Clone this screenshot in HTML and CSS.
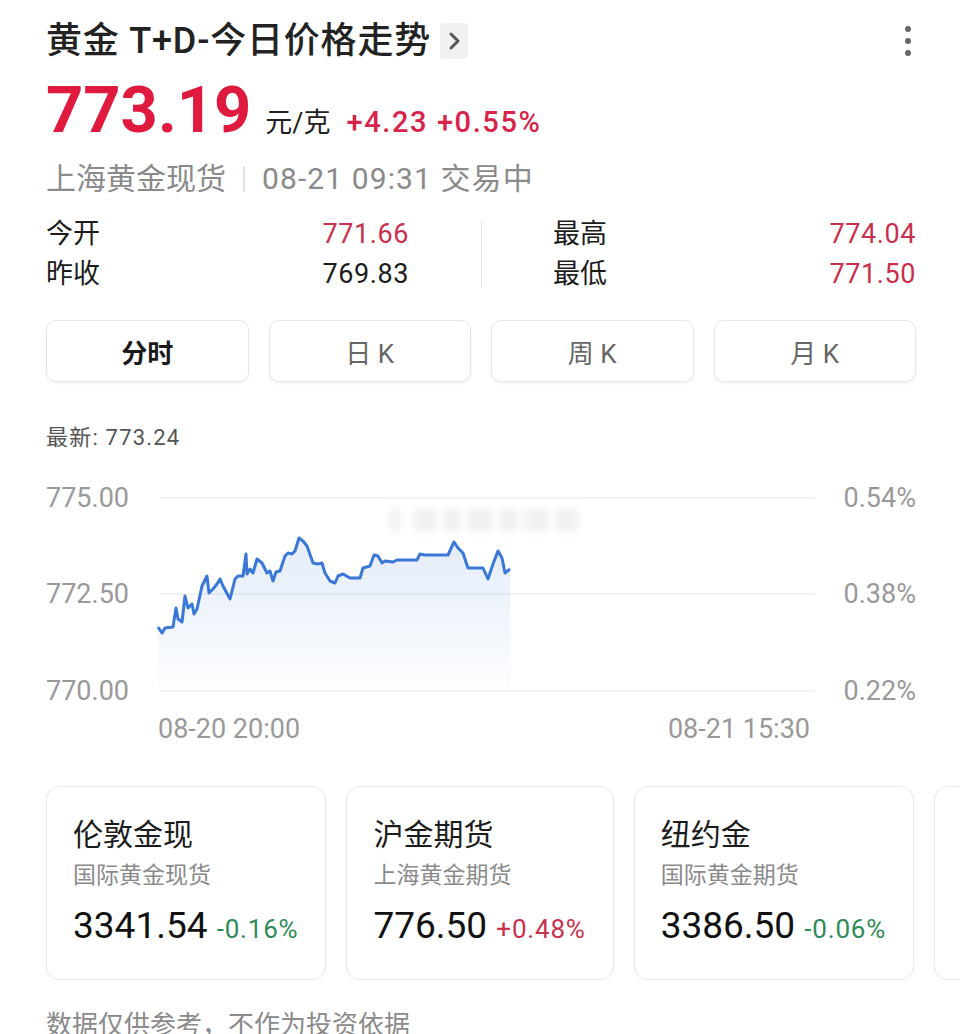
FILE: index.html
```html
<!DOCTYPE html>
<html lang="zh-CN">
<head>
    <meta charset="UTF-8">
    <title>黄金 T+D-今日价格走势</title>
    <link rel="stylesheet" href="styles.css">
</head>
<body>
    <div class="page">
        <header class="head">
            <h1 class="title">黄金 T+D-今日价格走势</h1>
            <span class="more-btn">
                <svg width="28" height="36" viewBox="0 0 28 36"><path d="M11 11 L18 18 L11 25" fill="none" stroke="#555" stroke-width="3" stroke-linecap="round" stroke-linejoin="round"/></svg>
            </span>
            <span class="kebab">
                <svg width="10" height="34" viewBox="0 0 10 34"><circle cx="5" cy="5" r="3" fill="#666"/><circle cx="5" cy="17" r="3" fill="#666"/><circle cx="5" cy="29" r="3" fill="#666"/></svg>
            </span>
        </header>

        <div class="price-row">
            <span class="price">773.19</span>
            <span class="unit">元/克</span>
            <span class="change">+4.23 +0.55%</span>
        </div>

        <div class="meta">
            <span>上海黄金现货</span>
            <span class="sep"></span>
            <span class="meta-time">08-21 09:31 交易中</span>
        </div>

        <div class="stats">
            <div class="stat-col">
                <div class="stat"><span>今开</span><span class="up">771.66</span></div>
                <div class="stat"><span>昨收</span><span>769.83</span></div>
            </div>
            <div class="divider"></div>
            <div class="stat-col">
                <div class="stat"><span>最高</span><span class="up">774.04</span></div>
                <div class="stat"><span>最低</span><span class="up">771.50</span></div>
            </div>
        </div>

        <div class="tabs">
            <div class="tab active">分时</div>
            <div class="tab">日 K</div>
            <div class="tab">周 K</div>
            <div class="tab">月 K</div>
        </div>

        <div class="latest">最新: 773.24</div>

        <svg class="chart" width="870" height="280" viewBox="0 0 870 280">
            <defs>
                <linearGradient id="fill" x1="0" y1="0" x2="0" y2="1">
                    <stop offset="0" stop-color="#3a78d8" stop-opacity="0.14"/>
                    <stop offset="1" stop-color="#3a78d8" stop-opacity="0.01"/>
                </linearGradient>
                <filter id="smudge" x="-20%" y="-50%" width="140%" height="200%"><feGaussianBlur stdDeviation="4"/></filter>
            </defs>
            <g stroke="#ececec" stroke-width="1.5">
                <line x1="114" y1="27" x2="769" y2="27"/>
                <line x1="114" y1="123" x2="769" y2="123"/>
                <line x1="114" y1="220" x2="769" y2="220"/>
            </g>
            <g class="axis">
                <text x="0" y="36">775.00</text>
                <text x="0" y="132">772.50</text>
                <text x="0" y="229">770.00</text>
                <text x="870" y="36" text-anchor="end">0.54%</text>
                <text x="870" y="132" text-anchor="end">0.38%</text>
                <text x="870" y="229" text-anchor="end">0.22%</text>
                <text x="112" y="267">08-20 20:00</text>
                <text x="764" y="267" text-anchor="end">08-21 15:30</text>
            </g>
            <g filter="url(#smudge)" fill="#dcdcdc" opacity="0.45">
                <rect x="344" y="38" width="10" height="22"/>
                <rect x="368" y="38" width="22" height="22"/>
                <rect x="398" y="38" width="16" height="22"/>
                <rect x="422" y="38" width="24" height="22"/>
                <rect x="454" y="38" width="18" height="22"/>
                <rect x="480" y="38" width="22" height="22"/>
                <rect x="510" y="38" width="22" height="22"/>
            </g>
            <path fill="url(#fill)" d="M112 156 L116 162 L119 157 L127 156 L130 137 L132 148 L136 151 L139 125 L142 137 L146 133 L148 143 L151 138 L156 115 L161 105 L163 122 L167 118 L171 113 L174 108 L177 115 L184 128 L189 108 L192 105 L197 105 L200 83 L201 103 L204 98 L207 102 L211 88 L216 92 L221 102 L224 100 L227 110 L230 101 L234 100 L239 85 L242 82 L246 83 L249 80 L253 67 L257 70 L261 75 L267 92 L272 93 L276 92 L279 102 L284 110 L289 112 L292 105 L297 103 L304 107 L314 107 L317 97 L324 95 L328 84 L332 85 L336 92 L339 90 L347 91 L351 89 L371 89 L374 83 L379 84 L402 84 L408 71 L412 77 L417 82 L422 97 L437 97 L442 108 L447 93 L452 80 L456 87 L459 102 L464 98 L465 220 L112 220 Z"/>
            <path fill="none" stroke="#3a78d8" stroke-width="3" stroke-linejoin="round" d="M112 156 L116 162 L119 157 L127 156 L130 137 L132 148 L136 151 L139 125 L142 137 L146 133 L148 143 L151 138 L156 115 L161 105 L163 122 L167 118 L171 113 L174 108 L177 115 L184 128 L189 108 L192 105 L197 105 L200 83 L201 103 L204 98 L207 102 L211 88 L216 92 L221 102 L224 100 L227 110 L230 101 L234 100 L239 85 L242 82 L246 83 L249 80 L253 67 L257 70 L261 75 L267 92 L272 93 L276 92 L279 102 L284 110 L289 112 L292 105 L297 103 L304 107 L314 107 L317 97 L324 95 L328 84 L332 85 L336 92 L339 90 L347 91 L351 89 L371 89 L374 83 L379 84 L402 84 L408 71 L412 77 L417 82 L422 97 L437 97 L442 108 L447 93 L452 80 L456 87 L459 102 L464 98"/>
        </svg>

        <div class="cards">
            <div class="card">
                <div class="card-title">伦敦金现</div>
                <div class="card-sub">国际黄金现货</div>
                <div class="card-value">3341.54 <span class="down">-0.16%</span></div>
            </div>
            <div class="card">
                <div class="card-title">沪金期货</div>
                <div class="card-sub">上海黄金期货</div>
                <div class="card-value">776.50 <span class="up">+0.48%</span></div>
            </div>
            <div class="card">
                <div class="card-title">纽约金</div>
                <div class="card-sub">国际黄金期货</div>
                <div class="card-value">3386.50 <span class="down">-0.06%</span></div>
            </div>
            <div class="card card-next"></div>
        </div>

        <p class="note">数据仅供参考，不作为投资依据</p>
    </div>
</body>
</html>
```

FILE: styles.css
```css
body { margin: 0; background: #fff; font-family: Roboto, "Noto Sans CJK SC", sans-serif; color: #1c1c1c; overflow: hidden; }
.page { padding: 19px 44px 0 46px; }

.head { display: flex; align-items: center; height: 44px; }
.title { margin: 0; font-size: 36px; font-weight: 500; line-height: 44px; color: #222; letter-spacing: 0.8px; }
.more-btn { display: flex; margin-left: 9px; background: #f1f1f1; border-radius: 4px; }
.kebab { display: flex; margin-left: auto; margin-right: 3px; }

.price-row { display: flex; align-items: baseline; margin-top: 12px; line-height: 70px; }
.price { font-size: 65px; font-weight: 700; color: #e0193f; }
.unit { margin-left: 14px; font-size: 27px; color: #222; }
.change { margin-left: 16px; font-size: 29px; font-weight: 500; color: #d8234a; letter-spacing: 1.6px; }

.meta { display: flex; align-items: center; margin-top: 3px; font-size: 30px; line-height: 36px; color: #8a8a8a; }
.meta .sep { width: 2px; height: 26px; background: #e2e2e2; margin: 0 17px; }
.meta-time { letter-spacing: 1.1px; }

.stats { display: grid; grid-template-columns: 363px 1px 363px; justify-content: space-between; margin-top: 17px; font-size: 27px; line-height: 40px; }
.stat { display: flex; justify-content: space-between; }
.stat span:last-child { letter-spacing: 0.6px; }
.divider { background: #e4e4e4; margin: 6px 0; }
.up { color: #c9304d; }
.down { color: #2e8b5a; }

.tabs { display: grid; grid-template-columns: repeat(4, 1fr); gap: 20px; margin-top: 26px; }
.tab { height: 60px; display: flex; align-items: center; justify-content: center; border: 1px solid #e6e6e6; border-radius: 10px; box-shadow: 0 2px 3px rgba(0,0,0,0.05); font-size: 26px; color: #666; }
.tab.active { color: #1a1a1a; font-weight: 700; }

.latest { margin-top: 42px; font-size: 22px; line-height: 28px; color: #555; letter-spacing: 1.2px; }

.chart { display: block; margin-top: 19px; }
.axis text { font-family: Roboto, sans-serif; font-size: 27px; fill: #999; }

.cards { display: flex; gap: 20px; margin-top: 35px; margin-right: -44px; overflow: hidden; }
.card { flex: none; padding: 29px 27px 28px 26px; border: 1px solid #e8e8e8; border-radius: 14px; box-shadow: 0 2px 4px rgba(0,0,0,0.03); }
.card-next { width: 200px; padding: 0; }
.card-title { font-size: 30px; line-height: 38px; color: #1c1c1c; }
.card-sub { margin-top: 6px; font-size: 23px; line-height: 32px; color: #8a8a8a; }
.card-value { margin-top: 12px; font-size: 37px; line-height: 44px; color: #111; white-space: nowrap; }
.card-value span { font-size: 26px; letter-spacing: 0.8px; }

.note { margin: 28px 0 0; font-size: 26px; line-height: 34px; color: #8a8a8a; }
```
